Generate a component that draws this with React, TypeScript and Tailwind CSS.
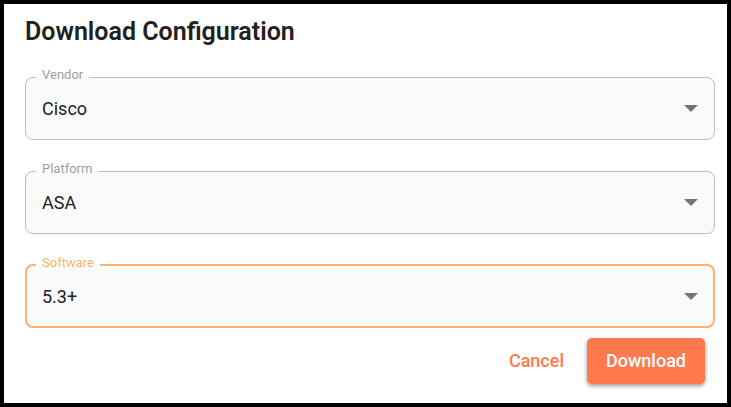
import { useId } from "react";

type FieldProps = {
  label: string;
  options: string[];
  active?: boolean;
};

function SelectField({ label, options, active = false }: FieldProps) {
  const id = useId();
  return (
    <fieldset
      className={
        active
          ? "min-w-0 rounded-lg border-2 border-[#ffb36b] bg-[#fafafa] px-[9px]"
          : "min-w-0 rounded-lg border border-[#bdbdbd] bg-[#fafafa] px-[10px]"
      }
    >
      <legend
        className={
          active
            ? "px-[6px] pb-1 text-[13px] leading-4 text-[#ffb36b]"
            : "px-[6px] pb-1 text-[13px] leading-4 text-[#9e9e9e]"
        }
      >
        <label htmlFor={id}>{label}</label>
      </legend>
      <div
        className={
          active
            ? "grid h-[51px] grid-cols-1 items-center px-[6px] pb-2"
            : "grid h-[52px] grid-cols-1 items-center px-[6px] pb-[9px]"
        }
      >
        <select
          id={id}
          className="col-start-1 row-start-1 h-8 w-full appearance-none bg-transparent text-lg text-[#212121] outline-none"
        >
          {options.map((option) => (
            <option key={option}>{option}</option>
          ))}
        </select>
        <svg
          viewBox="0 0 14 7"
          className="pointer-events-none col-start-1 row-start-1 h-[7px] w-[14px] justify-self-end fill-[#757575]"
          aria-hidden="true"
        >
          <path d="M0 0h14L7 7z" />
        </svg>
      </div>
    </fieldset>
  );
}

export default function App() {
  return (
    <div className="border-4 border-black bg-white pt-3 pr-3 pb-[19px] pl-[21px] font-['Roboto',sans-serif]">
      <h1 className="text-[25px] leading-8 font-semibold text-[#212121]">
        Download Configuration
      </h1>
      <form className="mt-[19px]" onSubmit={(event) => event.preventDefault()}>
        <div className="flex flex-col gap-[21px]">
          <SelectField label="Vendor" options={["Cisco"]} />
          <SelectField label="Platform" options={["ASA"]} />
          <SelectField label="Software" options={["5.3+"]} active />
        </div>
        <div className="mt-[10px] flex justify-end gap-1 pr-[10px]">
          <button
            type="button"
            className="h-[46px] rounded-[5px] px-[19px] text-lg font-medium text-[#ff784e]"
          >
            Cancel
          </button>
          <button
            type="submit"
            className="h-[46px] rounded-[5px] bg-[#ff784e] px-[19px] text-lg font-medium text-white shadow-[0_2px_4px_rgba(0,0,0,0.4)]"
          >
            Download
          </button>
        </div>
      </form>
    </div>
  );
}
